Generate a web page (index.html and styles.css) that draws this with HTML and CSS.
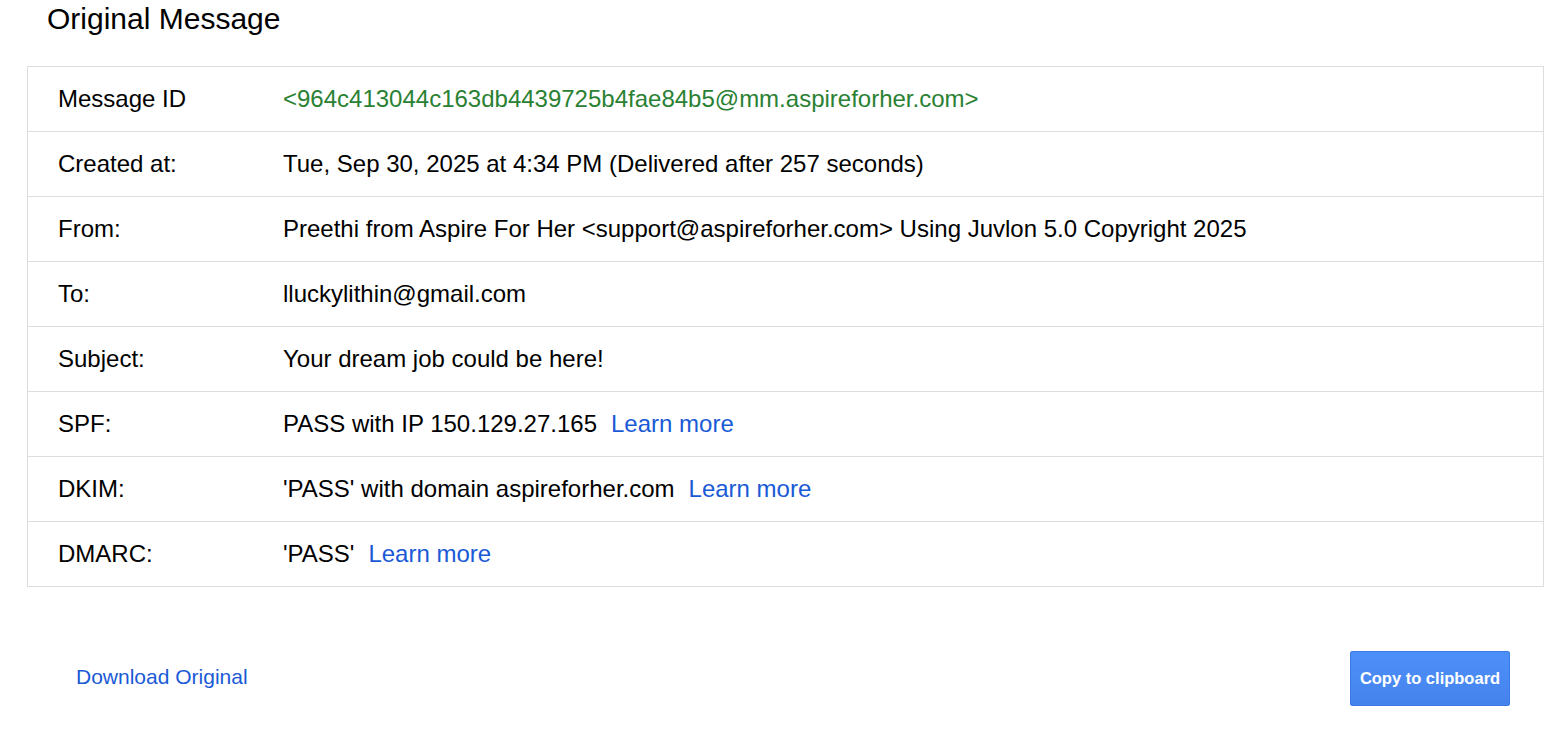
FILE: index.html
```html
<!DOCTYPE html>
<html>
<head>
<meta charset="utf-8">
<link rel="stylesheet" href="styles.css">
</head>
<body>
<h1 class="title">Original Message</h1>
<div class="details">
  <div class="row"><div class="label">Message ID</div><div class="value msgid">&lt;964c413044c163db4439725b4fae84b5@mm.aspireforher.com&gt;</div></div>
  <div class="row"><div class="label">Created at:</div><div class="value">Tue, Sep 30, 2025 at 4:34 PM (Delivered after 257 seconds)</div></div>
  <div class="row"><div class="label">From:</div><div class="value">Preethi from Aspire For Her &lt;support@aspireforher.com&gt; Using Juvlon 5.0 Copyright 2025</div></div>
  <div class="row"><div class="label">To:</div><div class="value">lluckylithin@gmail.com</div></div>
  <div class="row"><div class="label">Subject:</div><div class="value">Your dream job could be here!</div></div>
  <div class="row"><div class="label">SPF:</div><div class="value">PASS with IP 150.129.27.165<a class="learn" href="#">Learn more</a></div></div>
  <div class="row"><div class="label">DKIM:</div><div class="value">'PASS' with domain aspireforher.com<a class="learn" href="#">Learn more</a></div></div>
  <div class="row"><div class="label">DMARC:</div><div class="value">'PASS'<a class="learn" href="#">Learn more</a></div></div>
</div>
<div class="footer">
  <a class="download" href="#">Download Original</a>
  <button class="copy">Copy to clipboard</button>
</div>
</body>
</html>
```
FILE: styles.css
```css
html, body {
  margin: 0;
  padding: 0;
  background: #fff;
  font-family: "Liberation Sans", Arial, sans-serif;
  color: #000;
}
.title {
  margin: 0;
  padding: 2px 0 0 47px;
  font-size: 30px;
  font-weight: normal;
  line-height: 34px;
}
.details {
  margin: 30px 24px 0 27px;
  border: 1px solid #dddddd;
}
.row {
  display: flex;
  align-items: center;
  height: 64px;
  border-top: 1px solid #dddddd;
  font-size: 24px;
}
.row:first-child {
  border-top: none;
}
.label {
  width: 225px;
  padding-left: 30px;
  flex-shrink: 0;
}
.value {
  white-space: nowrap;
}
.msgid {
  color: #2a8133;
}
.learn {
  color: #1a5ad6;
  text-decoration: none;
  margin-left: 14px;
}
.footer {
  display: flex;
  justify-content: space-between;
  align-items: center;
  margin-top: 64px;
  padding: 0 58px 0 76px;
}
.download {
  color: #1a5ad6;
  text-decoration: none;
  font-size: 21px;
  margin-top: -4px;
}
.copy {
  width: 160px;
  height: 55px;
  border: 1px solid #3c7ae6;
  border-radius: 2px;
  background: linear-gradient(#4d8ff9, #4583ec);
  color: #fff;
  font-family: "Liberation Sans", Arial, sans-serif;
  font-weight: bold;
  font-size: 16.5px;
  padding: 0;
}
```
